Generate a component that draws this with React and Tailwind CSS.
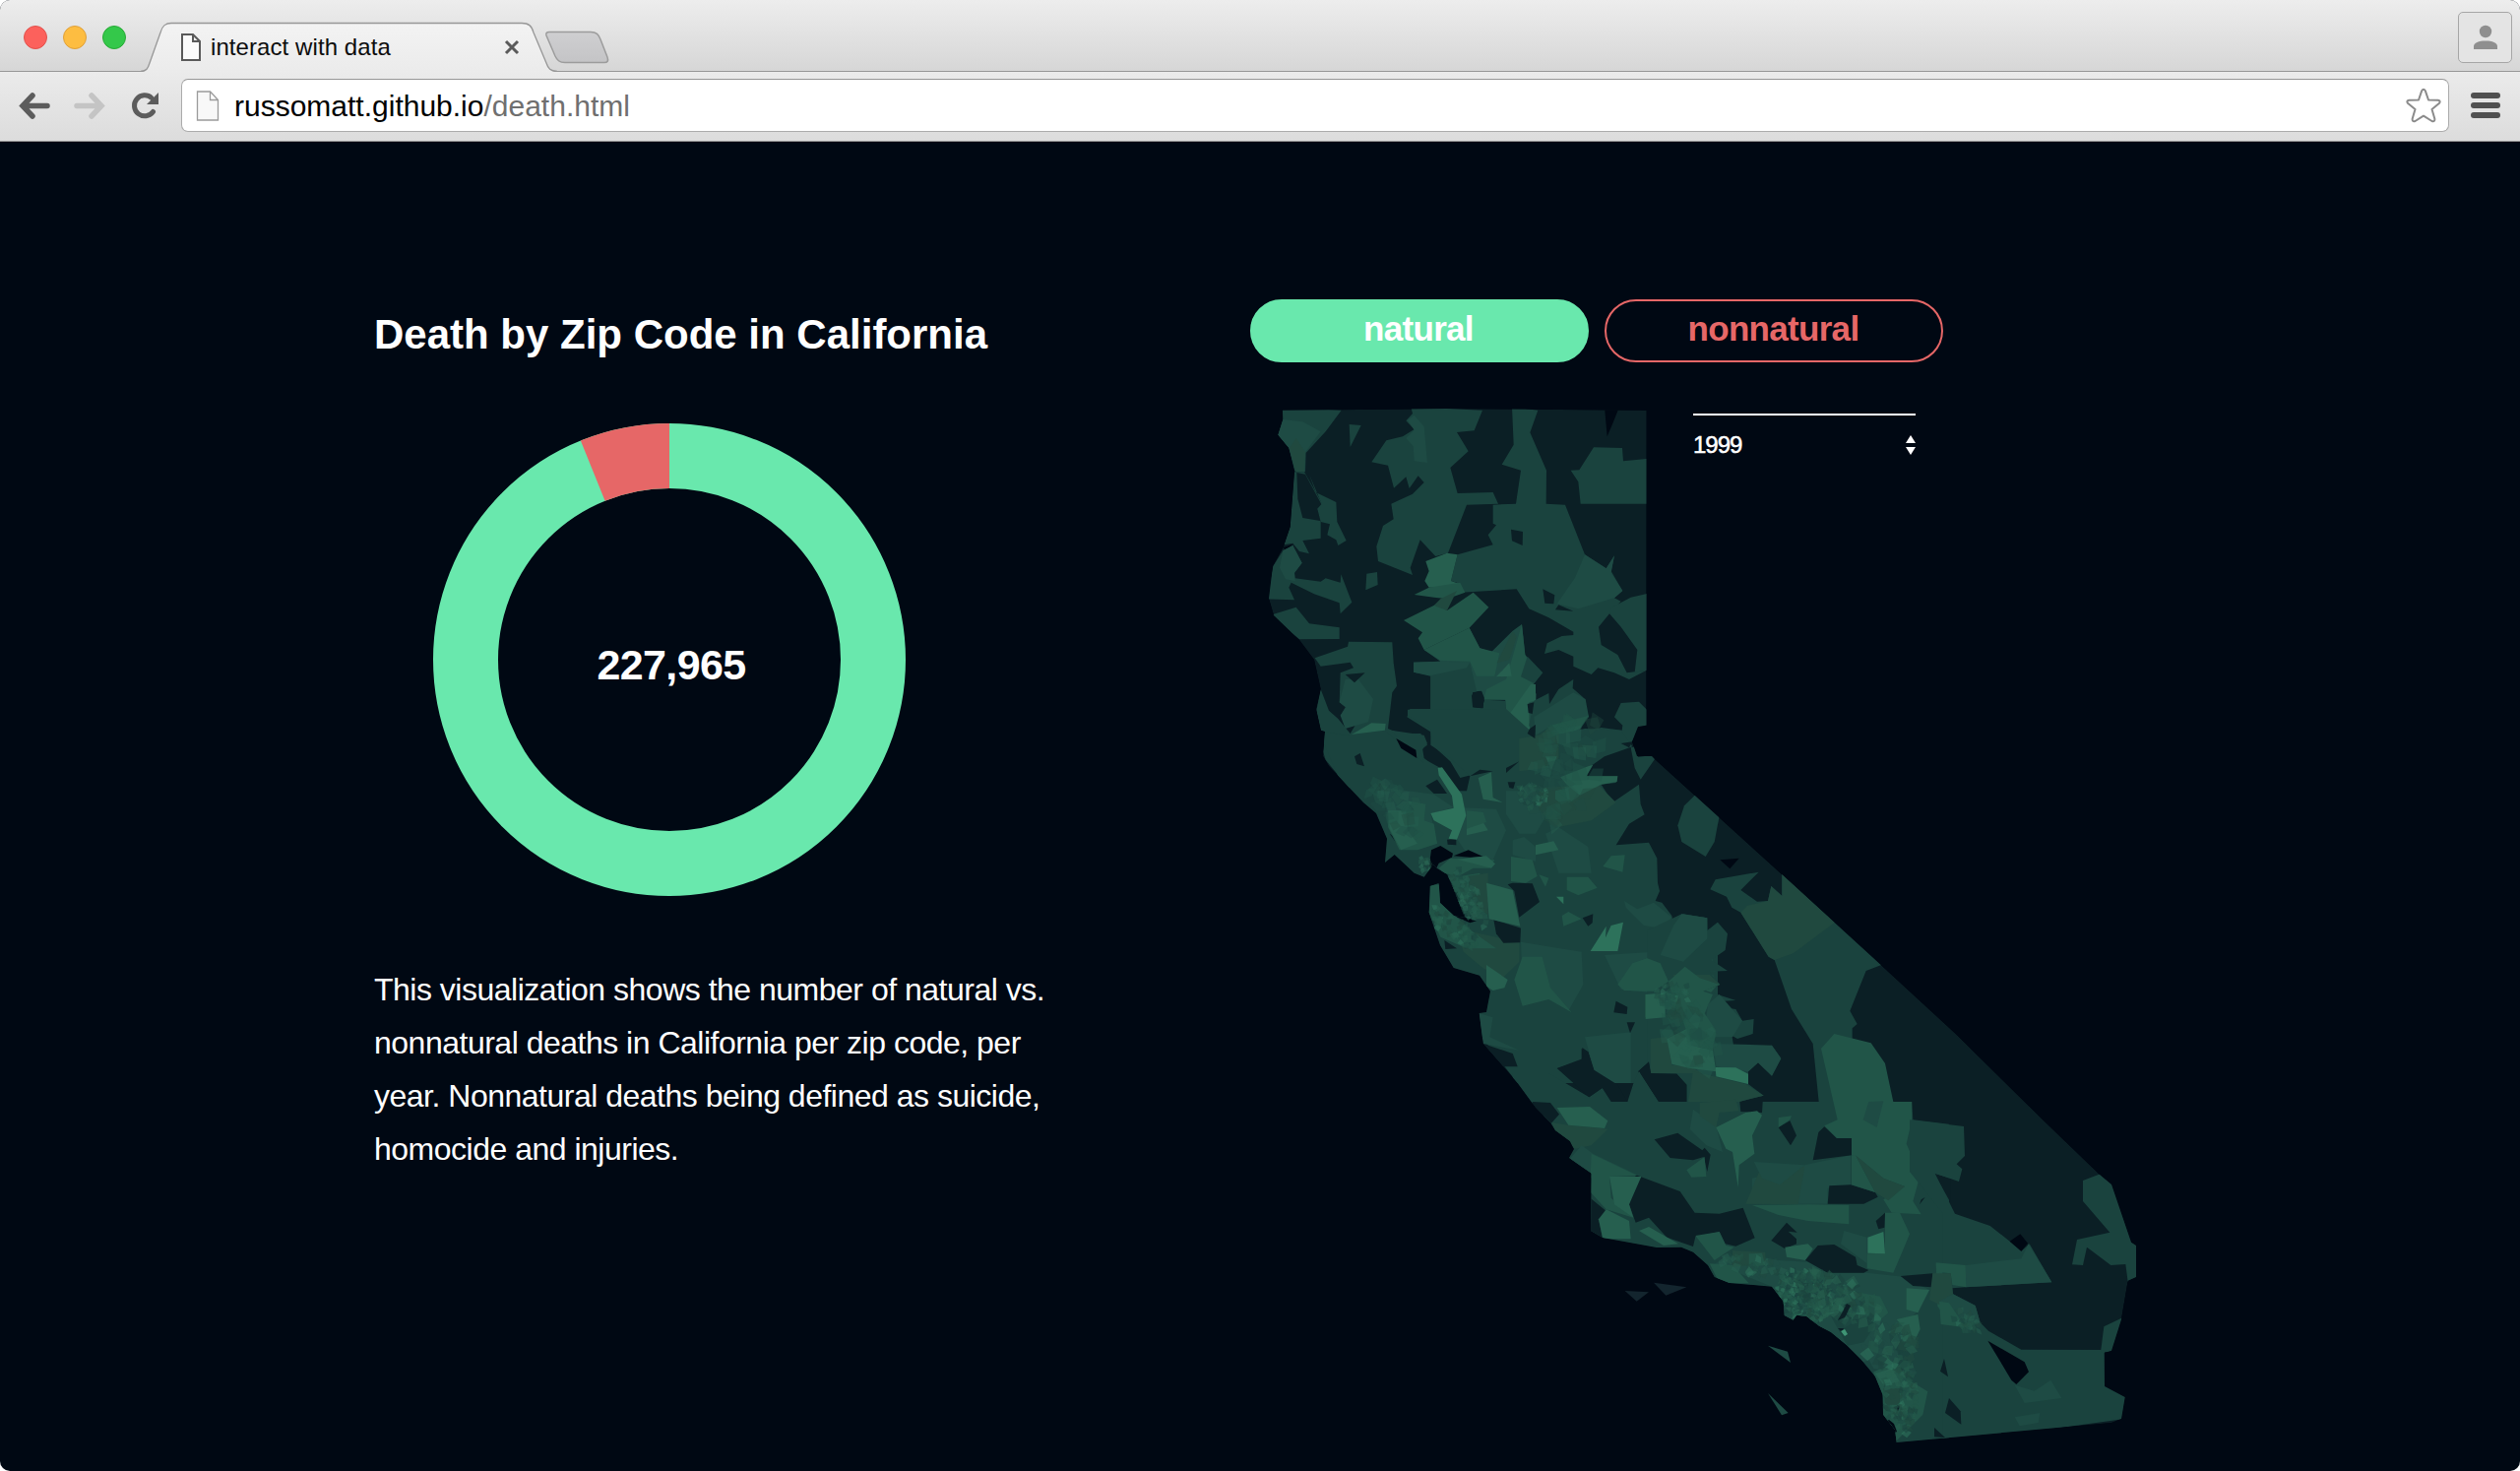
import React from "react";

const FILL = {
  k: "#000813",
  d: "#0b1f25",
  a: "#1a433e",
  b: "#1e4b44",
  g: "#20493f",
  c: "#215548",
  e: "#265f4f",
  f: "#2d725b",
  i: "#13252e",
};

const OUTLINE =
  "1302.7,416.7 1433,415.5 1470,415 1672.7,416.7 1672.5,736.7 1664,738 1658,753 1663,768 1678,768 1681,771 1810,888 1910.7,980 1986.7,1050 2078,1140 2133,1193 2145,1203 2165,1261.7 2170,1265 2170,1297 2161.7,1300.7 2155,1340 2145,1371.7 2137.7,1374 2138,1408 2158.7,1419 2155,1441 2145,1445 1926.7,1465 1925,1452 1913,1436.7 1912.7,1416.7 1905,1398 1890,1380 1876.7,1366.7 1860,1353 1848,1346.7 1835,1336.7 1825,1335.7 1821.7,1340.7 1812.7,1336 1811.7,1321.7 1800,1306.7 1756.7,1303 1741.7,1297 1735,1285 1720,1271.7 1708,1266.7 1683,1267 1628,1257 1616,1250 1616.7,1191.7 1594,1176 1599,1167 1595,1159 1580,1148 1575,1140 1560,1125 1541.7,1100 1506.7,1060 1502.7,1029 1510,1028 1514,1006.7 1503,990.7 1476.7,983 1463,960 1451.7,926.7 1452.7,900 1461.7,897 1463,917 1477,930 1488,932 1476.7,903 1470,888 1460,882 1456,878 1446.7,890.7 1436.7,886.7 1416.7,868 1407,876 1409,851.7 1398,826 1385,815 1350,778 1344,768 1346,743 1342,742 1337,720 1341.7,700 1335,670 1320,650 1294,625 1289,608 1293,575 1304,555 1310.7,535 1315,478 1309,455 1298,441.7 1303,426";

/* Zip code shapes, grouped by region. Each region has its own origin, three units to a pixel. */
const REGIONS = [
  {
    name: "north",
    x: 1270,
    y: 400,
    shapes: [
      ["k", "1080,40 1125,40 1105,90 1088,130"],
      ["a", "98,40 278,50 230,115 170,180 168,238 135,235 118,165 85,125 100,78"],
      ["b", "100,78 160,85 215,115 168,178 165,238 140,238 118,165 85,125"],
      ["g", "140,135 168,178 165,236 138,236 120,165"],
      ["a", "302,93 338,96 305,162"],
      ["a", "490,40 708,50 683,112 630,117 665,175 610,225 632,303 740,300 756,335 660,338 603,485 565,495 518,445 488,530 495,552 390,510 385,465 405,402 437,382 430,335 495,305 530,270 512,250 485,288 475,253 438,287 420,218 370,208 415,142 465,130 500,108 475,82 495,60"],
      ["b", "500,65 530,100 540,210 500,205 497,160 475,135 500,110 480,80"],
      ["a", "798,40 877,50 853,118 903,233 902,335 960,338 1020,490 1085,532 1110,493 1100,540 1135,600 1110,622 1130,632 1095,670 1062,710 1070,765 1120,795 1148,850 1208,842 1155,870 1110,850 1060,835 1040,855 985,830 985,800 940,780 897,792 905,760 950,738 985,735 985,725 910,682 850,655 812,595 680,603 640,605 630,575 612,570 632,490 740,460 725,430 750,400 740,395 740,338 810,335 825,233 767,215 803,155"],
      ["b", "1020,490 1085,532 1110,493 1100,545 1135,600 1110,622 1000,655 935,640 990,560"],
      ["d", "795,413 831,420 830,462 798,448"],
      ["d", "892,595 928,613 925,640 898,638"],
      ["d", "940,643 985,662 930,658"],
      ["a", "1047,163 1134,165 1137,205 1208,198 1208,335 1007,335 1000,268 977,233 1003,232"],
      ["a", "1212,608 1160,620 1100,652 1095,670 1130,710 1180,780 1172,848 1212,842"],
      ["a", "135,238 165,238 220,335 205,350 215,390 215,440 160,447 180,487 150,480 130,455 103,460 122,405"],
      ["d", "142,240 168,245 218,338 205,350 218,388 160,378 145,320"],
      ["a", "180,245 200,300 262,330 265,390 293,447 268,462 262,445 235,430 243,397 215,390 205,350 218,335"],
      ["k", "100,468 130,458 110,478"],
      ["a", "100,478 130,462 158,515 135,545 137,562 215,572 230,562 275,575 277,550 310,635 275,670 272,637 195,610 125,575 118,590 135,628 50,625 70,525"],
      ["b", "100,478 130,462 158,515 135,545 137,570 108,565 90,530"],
      ["a", "60,675 140,650 180,700 272,712 272,747 150,748"],
      ["a", "355,548 387,543 389,582 352,598"],
      ["a", "197,805 297,770 300,755 433,757 437,820 447,890 433,910 420,1020 455,1035 520,1035 540,1070 525,1080 530,1110 575,1145 600,1200 300,1200 230,1115 222,1090 228,1030 215,1025 202,965 215,900 240,965 268,990 305,1035 320,1010 275,980 290,955 272,940 275,850 315,835 305,818 215,830"],
      ["b", "290,870 330,870 375,930 360,1000 290,1020 275,980 292,955 272,940"],
      ["d", "290,855 350,850 318,880"],
      ["e", "297,1045 370,1003 413,1005 405,1072 335,1082"],
      ["b", "530,780 668,713 700,775 735,787 800,722 828,702 838,795 890,850 860,890 872,915 868,1000 850,1050 870,1050 810,1080 782,1120 745,1050 780,980 778,932 712,930 700,905 680,910 680,955 550,960 550,860 498,848 498,818 580,815"],
      ["c", "530,780 668,713 700,775 760,790 745,860 690,860 670,815 580,812"],
      ["a", "550,820 670,820 690,905 680,955 710,958 712,932 778,935 780,980 750,1050 780,1120 780,1200 720,1150 640,1170 610,1120 555,1070 550,1030 478,985 487,960 550,960"],
      ["b", "498,818 580,815 670,818 660,835 552,858 498,848"],
      ["e", "535,510 600,485 632,490 612,570 640,580 635,590 545,590 532,570 545,540"],
      ["c", "500,612 545,590 640,575 655,605 600,625 560,620"],
      ["c", "468,690 570,640 600,660 680,605 727,650 668,713 530,780 512,745 525,727"],
      ["g", "580,625 630,600 600,660 560,645"],
      ["d", "678,910 705,905 715,930 705,958 678,955"],
      ["c", "780,870 828,702 838,795 870,860 850,930 850,1000 860,1050 785,1120 780,980 778,932 712,932 720,900"],
      ["g", "752,820 800,722 812,740 790,810"],
      ["a", "845,800 892,850 865,882 825,862"],
      ["e", "750,862 790,820 797,860"],
      ["e", "780,990 855,885 870,885 870,935 850,940 850,1010 865,1050 835,1050 810,1080 782,1120 778,1010"],
      ["a", "865,935 910,912 912,945 940,900 985,870 983,897 1015,925 1032,985 1000,1030 1070,1017 1133,1025 1135,1010 1110,985 1130,942 1185,938 1212,965 1212,1015 1165,1060 1130,1085 940,1155 900,1200 780,1200 830,1120 810,1080 870,1050 850,1010"],
      ["b", "865,985 985,910 1022,930 1032,985 920,1010 870,1040"],
      ["c", "915,1010 1032,980 1005,1020 950,1045"],
      ["g", "830,1080 920,1010 950,1045 940,1090 900,1120 830,1100"],
      ["k", "1190,1015 1215,1008 1215,1105 1180,1100 1165,1060"],
    ],
  },
  {
    name: "bay",
    x: 1330,
    y: 700,
    shapes: [
      ["a", "30,130 48,130 110,140 230,125 330,210 355,215 400,240 440,310 480,310 490,265 430,210 370,170 370,120 300,80 300,62 600,60 700,150 840,120 950,125 985,175 900,205 850,240 840,265 940,265 935,285 890,290 925,345 1005,290 1010,350 1022,382 975,410 935,475 1035,467 1060,515 1062,590 1068,615 1055,645 1075,650 1105,690 1110,715 1140,685 1212,697 1213,735 1245,710 1245,1200 635,1200 400,900 300,560 200,528"],
      ["b", "230,300 380,320 440,360 370,380 390,470 330,490 240,420"],
      ["a", "250,125 350,140 360,165 340,190 350,225 300,180"],
      ["b", "450,360 570,365 600,430 560,520 480,500 450,455"],
      ["b", "600,310 690,310 720,390 690,440 640,440 600,380"],
      ["g", "700,300 880,290 935,345 860,400 760,420 700,370"],
      ["g", "640,150 760,130 760,210 720,240 640,250"],
      ["b", "720,440 760,420 850,480 860,560 760,560"],
      ["b", "645,770 830,800 835,900 790,980 730,930 650,900"],
      ["c", "625,885 650,815 710,815 735,910 800,985 730,945 650,965"],
      ["b", "840,1060 980,1045 980,1200 900,1200 868,1160"],
      ["g", "450,730 640,770 640,830 590,880 530,850 470,800"],
      ["b", "1070,790 1150,700 1210,760 1240,860 1100,860"],
      ["b", "960,645 1000,670 1050,650 1105,695 1080,730 1020,720 965,665"],
      ["b", "900,810 1050,800 1100,880 1100,930 950,915"],
      ["k", "372,490 400,477 438,500 435,512 395,530 380,560 365,590 368,520"],
      ["k", "395,560 420,565 440,605 460,645 475,695 510,706 490,712 440,690 400,650 395,592"],
      ["k", "440,508 485,490 530,510 490,512"],
      ["k", "265,150 325,185 328,210 280,180"],
      ["d", "495,20 500,10 525,8 533,30 528,58 498,52"],
      ["d", "138,205 155,195 168,235 145,228"],
      ["d", "355,295 390,275 420,318 380,318"],
      ["d", "605,595 620,590 680,592 702,648 640,695 625,615"],
      ["d", "562,702 645,728 643,772 592,773 570,745"],
      ["d", "833,697 865,685 863,712 850,722"],
      ["d", "935,950 970,968 968,990 928,985"],
      ["d", "968,1015 993,1015 978,1048"],
      ["d", "605,283 628,283 622,303 610,300"],
      ["d", "600,240 640,220 600,255"],
      ["d", "490,265 520,245 560,250 520,258"],
      ["d", "420,458 448,457 448,475 422,473"],
      ["d", "412,765 450,790 415,792"],
      ["d", "665,45 685,40 680,75 668,72"],
      ["d", "672,120 690,108 688,150 665,135"],
      ["d", "243,405 258,412 248,420"],
      ["d", "245,440 268,455 270,475"],
      ["d", "950,165 985,160 975,178"],
      ["d", "830,1095 850,1105 868,1165 915,1200 810,1200 757,1155 830,1130"],
      ["d", "1003,1165 1035,1138 1040,1170 1120,1172 1140,1200 1015,1200"],
      ["d", "530,1080 620,1110 635,1150 590,1150"],
      ["f", "392,240 405,238 465,320 478,385 450,458 425,455 435,430 380,400 370,378 440,362 435,325 395,262"],
      ["e", "515,270 555,253 560,330 590,345 530,335"],
      ["e", "765,268 850,235 865,230 845,265 940,265 938,282 890,290 825,323 785,290"],
      ["e", "720,205 755,205 738,245"],
      ["e", "690,475 745,463 760,490 690,505"],
      ["c", "750,310 790,300 795,340 770,352 750,335"],
      ["c", "785,572 850,572 878,605 820,628 785,612"],
      ["c", "895,540 920,508 962,505 955,557"],
      ["b", "620,460 655,450 690,480 690,525 620,505"],
      ["c", "615,510 680,520 695,570 660,590 615,585"],
      ["c", "240,370 320,370 300,340 355,350 350,400 380,410 390,470 330,490 275,490 240,420"],
      ["e", "240,370 295,370 300,430 330,470 280,490 245,425"],
      ["e", "480,420 530,405 545,430 480,445"],
      ["c", "480,370 530,375 540,405 480,425"],
      ["c", "395,545 430,515 565,520 550,545 500,545 455,570 410,560"],
      ["e", "450,518 540,508 567,532 555,545"],
      ["c", "425,575 520,560 545,700 500,700 465,640"],
      ["g", "480,570 545,560 545,690 500,650"],
      ["c", "370,598 398,595 400,650 500,740 570,790 480,790 400,755 365,680"],
      ["e", "540,590 620,612 643,722 548,700"],
      ["f", "857,798 905,722 903,757 920,720 957,710 940,798"],
      ["c", "700,565 730,575 720,602"],
      ["f", "753,632 775,632 775,655"],
      ["c", "770,690 790,678 830,700 775,722"],
      ["e", "540,840 605,885 595,910 560,918 540,905"],
      ["c", "945,900 990,835 1030,820 1070,835 1098,890 1060,920 970,918"],
      ["c", "1100,880 1150,850 1230,870 1245,900 1160,1000 1100,985"],
      ["e", "1025,930 1085,925 1080,1005 1025,1000"],
      ["g", "1040,1065 1090,1060 1105,1145 1160,1150 1200,1170 1040,1170"],
      ["e", "1090,1060 1160,1035 1170,1085 1230,1100 1235,1165 1105,1145"],
      ["b", "518,988 560,1000 550,1060 640,1100 530,1080"],
    ],
  },
  {
    name: "sierra",
    x: 1640,
    y: 700,
    shapes: [
      ["a", "100,735 205,685 283,697 283,737 315,710 345,745 338,795 295,825 345,858 290,860 322,900 275,917 370,948 335,950 335,970 370,975 390,1010 425,1005 422,1050 375,1065 358,1055 365,1095 480,1085 508,1125 480,1178 438,1138 408,1165 408,1203 455,1238 380,1257 100,1257"],
      ["b", "180,720 205,685 283,697 283,760 210,830 140,810"],
      ["g", "180,870 290,870 322,900 275,917 210,950"],
      ["c", "165,890 215,845 260,880 320,900 270,920 300,930 270,1000 190,985"],
      ["b", "285,960 320,930 390,1010 360,1060 300,1060 280,1000"],
      ["c", "200,985 270,980 310,1040 300,1100 235,1085"],
      ["c", "10,900 55,835 100,820 140,835 165,890 120,920 30,918"],
      ["e", "95,930 155,925 155,1000 95,1005"],
      ["f", "160,925 195,935 190,955 165,945"],
      ["g", "110,1065 160,1060 175,1145 230,1150 270,1170 110,1170"],
      ["e", "160,1065 220,1035 235,1085 300,1100 310,1165 230,1155 175,1142"],
      ["b", "300,1080 480,1085 508,1125 480,1178 438,1138 408,1165 310,1150"],
      ["g", "240,1165 400,1203 455,1238 380,1257 225,1257"],
      ["f", "308,1152 370,1153 408,1172 408,1203 310,1180"],
      ["d", "72,1165 105,1135 110,1170 190,1172 220,1205 220,1257 135,1257"],
      ["a", "50,178 66,175 72,207 118,200 123,213 80,275 62,240"],
      ["a", "248,320 320,386 305,465 278,510 205,465 193,415 213,355"],
      ["k", "322,520 380,515 352,547"],
      ["a", "292,610 308,580 440,557 385,612 435,647 468,645 478,600 511,630 511,550 820,838 767,858 718,980 740,1020 725,1033 725,1070 640,1090 690,1320 623,1257 605,1080 540,975 488,825 470,815 385,680 358,665 342,632"],
      ["g", "385,680 405,660 468,645 478,600 511,630 511,550 672,710 545,805 488,825 470,815"],
    ],
  },
  {
    name: "south",
    x: 1560,
    y: 1050,
    shapes: [
      ["a", "-70,120 40,120 163,193 203,165 280,207 300,145 315,113 375,207 460,207 460,212 -70,212"],
      ["a", "0,207 280,207 1147,207 1150,262 1260,275 1260,1260 1060,1260 900,1000 700,900 500,760 100,640 100,420 20,240"],
      ["b", "660,440 820,400 960,370 960,460 890,470 890,518 660,518"],
      ["b", "480,230 550,280 570,360 520,340 470,290"],
      ["g", "690,400 820,405 800,520 640,518"],
      ["g", "500,210 610,200 620,235 560,240 550,285 500,250"],
      ["b", "940,600 1010,620 1010,700 930,640"],
      ["d", "65,105 145,75 142,42 160,55 178,110 250,155 280,207 230,207 203,165 163,193"],
      ["d", "315,113 345,88 352,122 430,122 460,155 460,207 375,207"],
      ["d", "622,207 692,207 690,240 625,237"],
      ["d", "-10,207 45,210 72,245 45,275 -10,235"],
      ["d", "362,322 433,302 508,355 515,347 533,368 523,420 512,375 480,385 410,378"],
      ["d", "740,285 775,265 795,310 777,340"],
      ["d", "845,385 862,300 880,283 918,318 963,318 963,370"],
      ["d", "305,430 440,480 485,545 560,548 632,530 668,622 610,647 578,640 560,603 487,618 480,648 400,620 345,560 305,575 285,520"],
      ["d", "160,495 215,540 192,565 205,630 160,600"],
      ["d", "895,463 960,460 1035,483 1043,497 1000,518 890,518"],
      ["d", "718,630 765,575 797,605 770,602 795,625 795,640 760,655"],
      ["d", "1215,425 1265,440 1265,515"],
      ["g", "50,270 100,278 220,290 170,340 120,350 60,300"],
      ["e", "65,225 165,222 220,265 210,288 100,278"],
      ["b", "105,380 140,340 175,365 310,430 225,435 170,440"],
      ["c", "170,365 310,432 225,435 230,500 298,560 215,535 165,480"],
      ["e", "225,435 322,435 285,520 298,560 240,520"],
      ["e", "192,565 215,535 285,570 290,625 205,625"],
      ["e", "315,600 345,588 435,640 390,645"],
      ["c", "460,415 515,375 520,435 475,437"],
      ["e", "550,285 640,240 675,235 690,248 660,310 667,365 620,400 617,468 600,360 580,350"],
      ["c", "740,255 780,250 775,262 740,285"],
      ["b", "665,390 820,400 745,460 690,440"],
      ["c", "870,45 910,0 1022,28 1065,90 1090,207 1146,207 1146,265 1130,335 1172,430 1150,510 1175,550 1085,545 1060,505 1125,465 1060,440 980,375 963,370 963,318 918,318 880,280 920,262"],
      ["b", "1015,207 1060,205 1040,285 998,262"],
      ["c", "963,370 975,370 1035,483 963,460"],
      ["g", "975,370 1060,440 1125,465 1075,508 1035,483"],
      ["c", "660,522 835,520 955,522 955,580 830,570 740,552"],
      ["c", "487,615 560,603 580,645 605,650 545,690"],
      ["e", "760,650 830,640 845,655 822,690 765,680"],
      ["c", "1065,545 1110,545 1140,610 1115,670 1090,728 1010,715 1010,670 1065,668"],
      ["f", "1012,620 1060,603 1065,670 1012,668"],
      ["d", "1037,570 1065,545 1063,590 1045,595"],
      ["b", "545,700 640,670 740,690 830,695 890,728 1010,728 1120,740 1200,780 1140,880 1100,960 1000,1000 830,900 740,900 720,770"],
      ["c", "530,700 600,705 650,760 560,760"],
      ["g", "600,660 700,665 700,700 600,710"],
      ["c", "650,670 690,668 700,705 650,710"],
      ["d", "822,690 860,645 910,642 975,680 980,705 1015,720 1000,728 890,728"],
      ["d", "1112,738 1210,730 1208,772 1150,768"],
      ["e", "1130,775 1200,780 1165,850 1130,840"],
      ["c", "995,790 1050,800 1075,850 1040,880 1000,850"],
      ["a", "900,860 990,850 1040,880 1000,940 950,950"],
      ["e", "1100,870 1165,855 1172,900 1155,935"],
      ["c", "1220,700 1262,705 1262,880 1225,830"],
      ["b", "990,945 1105,965 1105,1030 1030,1020"],
      ["c", "1030,1030 1100,1000 1130,1050 1195,1090 1180,1160 1100,1240 1100,1260 1040,1150"],
      ["e", "1035,1035 1085,1020 1110,1060 1060,1070"],
      ["g", "1060,1080 1110,1080 1110,1130 1065,1130"],
      ["d", "920,870 945,822 960,830 940,868"],
      ["d", "1080,1140 1112,1130 1105,1148"],
    ],
  },
  {
    name: "desert",
    x: 1860,
    y: 1050,
    shapes: [
      ["a", "240,262 405,282 408,372 383,397 400,412 390,450 317,425 378,548 485,585 545,632 580,662 605,640 673,757 410,772 370,775 372,793 440,828 455,880 480,905 580,962 833,963 850,1075 905,1108 895,1173 340,1250 340,545 240,420"],
      ["b", "410,705 580,685 602,640 673,757 410,772"],
      ["c", "320,697 410,705 412,772 370,765 365,730 322,725"],
      ["g", "310,730 365,730 372,793 330,825 300,810"],
      ["b", "372,793 440,828 455,880 410,895 330,815"],
      ["c", "330,815 360,820 410,895 335,885"],
      ["d", "275,505 287,498 270,520"],
      ["k", "545,632 577,610 600,638 580,662"],
      ["k", "478,935 590,1000 603,1030 565,1068 550,1055"],
      ["a", "768,447 825,425 865,460 925,635 940,645 940,742 905,756 898,702 853,705 780,650 768,705 735,703 750,627 850,605 768,510"],
      ["a", "832,892 895,862 860,970 822,970"],
      ["b", "560,1070 620,1088 670,1055 703,1110 590,1125"],
      ["b", "560,1168 637,1155 632,1185 575,1195"],
      ["d", "345,990 357,1045 333,1028"],
      ["d", "360,1110 395,1150 397,1190 348,1155"],
      ["d", "315,1200 348,1230 315,1228"],
    ],
  },
];

const ISLANDS = [
  ["i", "272,783 345,787 308,815"],
  ["i", "360,758 460,772 397,797"],
  ["b", "708,950 768,968 777,1002"],
  ["b", "708,1095 770,1155 750,1162"],
];

/* Dense areas: centre, spread, tilt, number of shapes, their size and opacity. */
const CITIES = [
  { cx: 1834, cy: 1316, rx: 32, ry: 24, tilt: 30, n: 330, size: 4, o: 0.7 },
  { cx: 1868, cy: 1318, rx: 46, ry: 20, tilt: 25, n: 110, size: 7, o: 0.6 },
  { cx: 1930, cy: 1418, rx: 17, ry: 42, tilt: 0, n: 110, size: 5, o: 0.6 },
  { cx: 1780, cy: 1285, rx: 34, ry: 10, tilt: 5, n: 30, size: 6, o: 0.5 },
  { cx: 1556, cy: 808, rx: 16, ry: 14, tilt: 0, n: 50, size: 4, o: 0.6 },
  { cx: 1491, cy: 912, rx: 12, ry: 34, tilt: -28, n: 70, size: 5, o: 0.5 },
  { cx: 1476, cy: 943, rx: 34, ry: 10, tilt: 38, n: 60, size: 5, o: 0.6 },
  { cx: 1700, cy: 1010, rx: 20, ry: 12, tilt: 0, n: 30, size: 5, o: 0.5 },
  { cx: 1449, cy: 878, rx: 10, ry: 8, tilt: 0, n: 16, size: 4, o: 0.5 },
  { cx: 1920, cy: 1365, rx: 26, ry: 26, tilt: 0, n: 40, size: 8, o: 0.6 },
  { cx: 1998, cy: 1342, rx: 18, ry: 9, tilt: 35, n: 24, size: 5, o: 0.5 },
  { cx: 1590, cy: 780, rx: 34, ry: 60, tilt: 20, n: 50, size: 12, o: 0.4 },
  { cx: 1420, cy: 820, rx: 36, ry: 18, tilt: 40, n: 30, size: 9, o: 0.4 },
  { cx: 1715, cy: 1045, rx: 22, ry: 46, tilt: -25, n: 45, size: 10, o: 0.4 },
];

function buildCities() {
  let s = 20147;
  const rnd = () => {
    s = (s * 16807) % 2147483647;
    return s / 2147483647;
  };
  const tones = [FILL.g, FILL.b, FILL.c, FILL.c, FILL.e, FILL.e, FILL.a, FILL.f];
  const out = [];
  CITIES.forEach((c) => {
    const t = (c.tilt * Math.PI) / 180;
    for (let i = 0; i < c.n; i++) {
      const r = Math.sqrt(rnd());
      const q = rnd() * Math.PI * 2;
      const u = c.rx * r * Math.cos(q);
      const v = c.ry * r * Math.sin(q);
      const x = c.cx + u * Math.cos(t) - v * Math.sin(t);
      const y = c.cy + u * Math.sin(t) + v * Math.cos(t);
      const start = rnd() * 6;
      const pts = [0, 1.6, 3.1, 4.7]
        .map((k) => {
          const w = c.size * (0.35 + rnd() * 0.75);
          return `${(x + w * Math.cos(start + k)).toFixed(1)},${(y + w * Math.sin(start + k)).toFixed(1)}`;
        })
        .join(" ");
      out.push([tones[Math.floor(rnd() * (c.size > 8 ? 5 : tones.length))], pts, c.o]);
    }
  });
  return out;
}

const CITY_SHAPES = buildCities();

function CaliforniaMap() {
  return (
    <svg className="col-start-1 row-start-1 block h-[1070px] w-[910px]" viewBox="1270 404 910 1070">
      <defs>
        <clipPath id="state">
          <polygon points={OUTLINE} />
        </clipPath>
      </defs>
      <g clipPath="url(#state)">
        <polygon points={OUTLINE} fill={FILL.d} />
        {REGIONS.map((r) => (
          <g key={r.name} transform={`translate(${r.x} ${r.y}) scale(0.33333)`}>
            {r.shapes.map(([f, p], i) => (
              <polygon key={i} points={p} fill={FILL[f]} />
            ))}
          </g>
        ))}
        {CITY_SHAPES.map(([f, p, o], i) => (
          <polygon key={i} points={p} fill={f} opacity={o} />
        ))}
        <polygon points="1867,1349 1873,1349 1871,1353" fill={FILL.d} />
        <polygon points="1870,1352 1874,1350 1877,1355 1874,1357" fill="#3f9575" />
        <polygon points="1872,1332 1876,1324 1880,1326 1874,1338 1867,1341" fill={FILL.d} />
        <path d="M1915 1444l6 3 4 8 2 -1-3-8-5-4z" fill={FILL.k} />
      </g>
      <g transform="translate(1560 1050) scale(0.33333)">
        {ISLANDS.map(([f, p], i) => (
          <polygon key={i} points={p} fill={FILL[f]} />
        ))}
      </g>
    </svg>
  );
}

function Donut() {
  const a = (22.06 * Math.PI) / 180;
  const at = (r) => `${240 - r * Math.sin(a)} ${240 - r * Math.cos(a)}`;
  return (
    <div className="grid size-[480px] place-items-center">
      <svg className="col-start-1 row-start-1 size-[480px]" viewBox="0 0 480 480">
        <circle cx="240" cy="240" r="207" fill="none" stroke="#69e8ad" strokeWidth="66" />
        <path d={`M240 0A240 240 0 0 0 ${at(240)}L${at(174)}A174 174 0 0 1 240 66Z`} fill="#e66767" />
      </svg>
      <span className="col-start-1 row-start-1 pt-[11px] pl-1 text-[43px] leading-none font-bold tracking-[-0.6px]">227,965</span>
    </div>
  );
}

function TabStrip() {
  return (
    <div className="flex h-[73px] bg-linear-to-b from-[#ededed] to-[#d6d6d6]">
      <div className="grid w-full">
        <svg className="col-start-1 row-start-1 h-[73px] w-full" fill="none">
          <defs>
            <linearGradient id="tab" x1="0" y1="0" x2="0" y2="1">
              <stop offset="0" stopColor="#f3f3f3" />
              <stop offset="1" stopColor="#ebebeb" />
            </linearGradient>
            <linearGradient id="newtab" x1="0" y1="0" x2="0" y2="1">
              <stop offset="0" stopColor="#cfcfd1" />
              <stop offset="1" stopColor="#c4c4c6" />
            </linearGradient>
          </defs>
          <path d="M0 72.5H2560" stroke="#979797" />
          <path d="M143 73.5C149 72 150 70 152 64L163 33C165 26 168 23.500 174 23.500H530C537 23.500 540 26 542 33L555 64C557 70 559 72 566 73.500Z" fill="url(#tab)" />
          <path d="M143 72.500C149 72 150 70 152 64L163 33C165 26 168 23.500 174 23.500H530C537 23.500 540 26 542 33L555 64C557 70 559 72 566 72.500" stroke="#979797" strokeWidth="1.300" />
          <path d="M558 32.500H600C606 32.500 608 35 610 40L617 58C618.500 62 617 63.500 614 63.500H574C568 63.500 566 61 564 57L555 36C554.500 34 555 32.500 558 32.500Z" fill="url(#newtab)" stroke="#9c9c9c" strokeWidth="1.500" />
        </svg>
        <div className="z-10 col-start-1 row-start-1 flex items-start">
          <div className="mt-[26px] ml-6 flex gap-4">
            <span className="size-6 rounded-full border border-[#e2514c] bg-[#fc615c]" />
            <span className="size-6 rounded-full border border-[#dfa03a] bg-[#fdbd41]" />
            <span className="size-6 rounded-full border border-[#27aa35] bg-[#34c84a]" />
          </div>
          <svg className="mt-[33px] ml-[55px] h-[30px] w-[22px]" viewBox="0 0 22 30" fill="#fbfbfb" stroke="#5a5a5a" strokeWidth="2">
            <path d="M2 2H13L20 9V28H2ZM13 2V9H20" />
          </svg>
          <span className="mt-[34px] ml-[9px] w-[298px] text-[24px] leading-[28px] tracking-[0.08px] text-[#0d0d0d]">interact with data</span>
          <svg className="mt-[40px] h-4 w-4" viewBox="0 0 16 16" stroke="#5a5a5a" strokeWidth="3">
            <path d="M2 2L14 14M14 2L2 14" />
          </svg>
          <div className="mt-3 mr-2 ml-auto flex h-[52px] w-[55px] items-center justify-center rounded-[5px] border-[1.500px] border-[#a6a6a6] bg-[#e4e4e4]">
            <svg className="h-[26px] w-6" viewBox="0 0 24 26" fill="#8f8f8f">
              <circle cx="12" cy="7" r="6.200" />
              <path d="M0 25V22C0 18.500 5 16.500 12 16.500S24 18.500 24 22V25Z" />
            </svg>
          </div>
        </div>
      </div>
    </div>
  );
}

function Toolbar() {
  return (
    <div className="flex h-[71px] items-start border-b border-[#8f8f8f] bg-linear-to-b from-[#ebebeb] to-[#dcdcdc]">
      <svg className="mt-5 ml-[19px] h-[29px] w-8" viewBox="0 0 32 29" fill="none" stroke="#5c5c5c" strokeWidth="5.500" strokeLinecap="round">
        <path d="M29 14.500H5M14 4L4 14.500L14 25" />
      </svg>
      <svg className="mt-5 ml-[24px] h-[29px] w-8" viewBox="0 0 32 29" fill="none" stroke="#c4c4c4" strokeWidth="5.500" strokeLinecap="round">
        <path d="M3 14.500H27M18 4L28 14.500L18 25" />
      </svg>
      <svg className="mt-5 ml-[26px] h-[29px] w-[29px]" viewBox="0 0 29 29" fill="none" stroke="#5c5c5c" strokeWidth="5" strokeLinecap="round">
        <path d="M22.500 20.500A10.500 10.500 0 1 1 21 6.500" />
        <path d="M28 1V13H16Z" fill="#5c5c5c" stroke="none" />
      </svg>
      <div className="mt-[7px] ml-[22px] flex h-[54px] w-[2304px] items-center rounded-[7px] border-[1.500px] border-[#ababab] border-t-[#969696] bg-white pr-[7px] pl-[14px]">
        <svg className="h-[31px] w-6" viewBox="0 0 24 31" fill="#f8f8f8" stroke="#9b9b9b" strokeWidth="1.300">
          <path d="M1.500 1H14.500L22.500 9.500V30H1.500ZM14.500 1V9.500H22.500" />
        </svg>
        <span className="ml-[15px] pt-[2px] text-[30px] leading-9 text-black">
          russomatt.github.io<span className="text-[#6f6f6f]">/death.html</span>
        </span>
        <svg className="ml-auto h-9 w-9" viewBox="0 0 36 36" fill="none" stroke="#8b8b8b" strokeWidth="2" strokeLinejoin="round">
          <path d="M16.200 3.200Q18 0.200 19.800 3.200L23 12.500L32.500 12.800Q36 13.300 33.800 16L26.500 22L29.300 31.500Q29.800 35 26.500 34L18 28.700L9.500 34Q6.200 35 6.700 31.500L9.500 22L2.200 16Q0 13.300 3.500 12.800L13 12.500Z" />
        </svg>
      </div>
      <div className="mt-[21px] ml-[22px] flex w-[30px] flex-col gap-1">
        <span className="h-[6px] rounded-[3px] bg-[#505050]" />
        <span className="h-[6px] rounded-[3px] bg-[#505050]" />
        <span className="h-[6px] rounded-[3px] bg-[#505050]" />
      </div>
    </div>
  );
}

export default function App() {
  return (
    <div className="h-[1494px] w-[2560px] bg-white font-['Liberation_Sans',Arial,sans-serif]">
      <div className="flex h-full flex-col overflow-hidden rounded-[10px] bg-[#000813] text-white">
        <TabStrip />
        <Toolbar />
        <main className="flex flex-1 pl-[380px]">
          <section className="w-[890px] pt-[172px]">
            <h1 className="text-[42px] leading-[48px] font-bold whitespace-nowrap">Death by Zip Code in California</h1>
            <div className="mt-[66px] ml-[60px]">
              <Donut />
            </div>
            <p className="mt-[68px] text-[32px] leading-[54px] tracking-[-0.5px] whitespace-nowrap">
              This visualization shows the number of natural vs.
              <br />
              nonnatural deaths in California per zip code, per
              <br />
              year. Nonnatural deaths being defined as suicide,
              <br />
              homocide and injuries.
            </p>
          </section>
          <section className="w-[910px] pt-[160px]">
            <div className="flex gap-4 text-[35px] leading-none font-bold tracking-[-0.7px]">
              <button className="h-16 w-[344px] rounded-full border-2 border-[#69e8ad] bg-[#69e8ad] pr-[2px] pb-[6px] text-white">natural</button>
              <button className="h-16 w-[344px] rounded-full border-2 border-[#e66767] pr-[1px] pb-[6px] text-[#e66767]">nonnatural</button>
            </div>
            <div className="mt-9 grid">
              <CaliforniaMap />
              <div className="z-10 col-start-1 row-start-1 mt-4 ml-[450px] flex h-12 w-[226px] items-end justify-between border-t-2 border-white">
                <span className="pb-[2px] text-[24px] leading-7 tracking-[-1px] [-webkit-text-stroke:0.500px_white]">1999</span>
                <svg className="mb-[6px] h-5 w-[10px]" viewBox="0 0 10 20" fill="white">
                  <path d="M5 0L10 8H0ZM5 20L0 12H10Z" />
                </svg>
              </div>
            </div>
          </section>
        </main>
      </div>
    </div>
  );
}
